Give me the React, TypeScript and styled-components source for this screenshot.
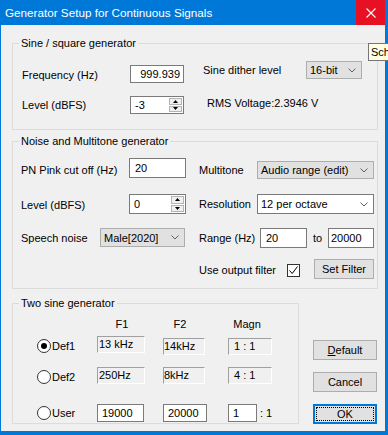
import styled, { createGlobalStyle } from "styled-components"

const GlobalStyle = createGlobalStyle`
  html, body { margin: 0; padding: 0; background: #0078d7; }
  body { font-family: "Liberation Sans", Arial, sans-serif; font-size: 11px; color: #000; }
  * { box-sizing: border-box; }
`

type Place = { $w?: number; $h?: number; $dy?: number; $ml?: number }

const Frame = styled.div`
  position: relative;
  width: 388px;
  height: 435px;
  overflow: hidden;
  background: #0078d7;
  display: flex;
  flex-direction: column;
`

const TitleBar = styled.div`
  height: 25px;
  flex-shrink: 0;
  display: flex;
  align-items: flex-start;
  padding: 0 3px 0 5px;
  color: #fff;
`

const Title = styled.span`
  flex: 1;
  line-height: 25px;
  font-size: 11.7px;
`

const CloseBtn = styled.div`
  width: 29px;
  height: 25px;
  background: #e81123;
  display: flex;
  align-items: center;
  justify-content: center;
`

const Body = styled.div`
  flex: 1;
  margin: 0 3px 4px 1px;
  background: #f0f0f0;
  padding: 10px 0 0 11px;
`

const Group = styled.fieldset<{ $w: number; $pb: number; $mt?: number }>`
  width: ${p => p.$w}px;
  margin: ${p => p.$mt || 0}px 0 0 0;
  padding: 0 0 ${p => p.$pb}px 0;
  border: 1px solid #dcdcdc;
  min-width: 0;
`

const Legend = styled.legend`
  margin-left: 6px;
  padding: 0 2px;
  line-height: 16px;
`

const Row = styled.div<{ $mt: number; $ml?: number }>`
  display: flex;
  align-items: flex-start;
  margin-top: ${p => p.$mt}px;
  margin-left: ${p => p.$ml || 0}px;
`

const Label = styled.span<Place & { $center?: boolean }>`
  display: block;
  flex-shrink: 0;
  width: ${p => (p.$w ? p.$w + "px" : "auto")};
  margin-top: ${p => p.$dy || 0}px;
  margin-left: ${p => p.$ml || 0}px;
  line-height: 16px;
  white-space: nowrap;
  text-align: ${p => (p.$center ? "center" : "left")};
`

const Edit = styled.div<Place & { $right?: boolean; $pl?: number }>`
  flex-shrink: 0;
  width: ${p => p.$w}px;
  height: ${p => p.$h}px;
  margin-top: ${p => p.$dy || 0}px;
  margin-left: ${p => p.$ml || 0}px;
  background: #fff;
  border: 1px solid #7a7a7a;
  padding: 0 3px 0 ${p => (p.$pl ?? 4)}px;
  line-height: ${p => (p.$h || 20) - 2}px;
  text-align: ${p => (p.$right ? "right" : "left")};
  white-space: nowrap;
  overflow: hidden;
`

const SpinBox = styled.div<Place>`
  flex-shrink: 0;
  display: flex;
  width: ${p => p.$w}px;
  height: ${p => p.$h}px;
  margin-top: ${p => p.$dy || 0}px;
  background: #fff;
  border: 1px solid #7a7a7a;
`

const SpinText = styled.span<{ $h: number }>`
  flex: 1;
  padding-left: 4px;
  line-height: ${p => p.$h - 2}px;
`

const SpinCol = styled.div`
  width: 15px;
  display: flex;
  flex-direction: column;
  gap: 1px;
  padding: 1px;
`

const SpinBtn = styled.div`
  flex: 1;
  background: #f0f0f0;
  border: 1px solid #b4b4b4;
  display: flex;
  align-items: center;
  justify-content: center;
`

const Combo = styled.div<Place & { $gray?: boolean }>`
  flex-shrink: 0;
  display: flex;
  align-items: center;
  width: ${p => p.$w}px;
  height: ${p => p.$h}px;
  margin-top: ${p => p.$dy || 0}px;
  margin-left: ${p => p.$ml || 0}px;
  padding: 0 5px 0 3px;
  background: ${p => (p.$gray ? "#e1e1e1" : "#fff")};
  border: 1px solid ${p => (p.$gray ? "#adadad" : "#7a7a7a")};
  white-space: nowrap;
`

const ComboText = styled.span`
  flex: 1;
`

const Static = styled.div<Place & { $pl?: number }>`
  flex-shrink: 0;
  width: ${p => p.$w}px;
  height: 17px;
  margin-top: ${p => p.$dy || 0}px;
  margin-left: ${p => p.$ml || 0}px;
  padding-left: ${p => p.$pl ?? 1}px;
  border-style: solid;
  border-width: 1px;
  border-color: #a0a0a0 #ffffff #ffffff #a0a0a0;
  line-height: 15px;
  white-space: nowrap;
`

const Button = styled.div<Place & { $focus?: boolean }>`
  flex-shrink: 0;
  display: flex;
  width: ${p => p.$w}px;
  height: ${p => p.$h}px;
  margin-top: ${p => p.$dy || 0}px;
  margin-left: ${p => p.$ml || 0}px;
  padding: ${p => (p.$focus ? "2px" : "0")};
  background: #e1e1e1;
  border: 1px solid ${p => (p.$focus ? "#0078d7" : "#adadad")};
  box-shadow: ${p => (p.$focus ? "inset 0 0 0 1px #0078d7" : "none")};
`

const ButtonFace = styled.span<{ $focus?: boolean }>`
  flex: 1;
  display: flex;
  align-items: center;
  justify-content: center;
  border: 1px dotted ${p => (p.$focus ? "#000" : "transparent")};
`

const CheckBox = styled.div<Place>`
  flex-shrink: 0;
  width: 13px;
  height: 13px;
  margin-top: ${p => p.$dy || 0}px;
  background: #fff;
  border: 1px solid #333;
  display: flex;
  align-items: center;
  justify-content: center;
`

const RadioItem = styled.div<Place>`
  flex-shrink: 0;
  display: flex;
  align-items: center;
  gap: 1px;
  width: ${p => p.$w}px;
  height: 16px;
  margin-top: ${p => p.$dy || 0}px;
  margin-left: ${p => p.$ml || 0}px;
`

const RadioCircle = styled.span<{ $on?: boolean }>`
  width: 14px;
  height: 14px;
  border-radius: 50%;
  border: 1px solid #333;
  background: #fff;
  display: flex;
  align-items: center;
  justify-content: center;
  &::after {
    content: "";
    width: 6px;
    height: 6px;
    border-radius: 50%;
    background: ${p => (p.$on ? "#000" : "transparent")};
  }
`

const BottomArea = styled.div`
  display: flex;
  align-items: flex-start;
  margin-top: 6px;
`

const ButtonCol = styled.div`
  display: flex;
  flex-direction: column;
  gap: 12px;
  margin-left: 14px;
  padding-top: 45px;
`

const Tooltip = styled.div`
  position: absolute;
  top: 43px;
  left: 368px;
  height: 18px;
  padding: 0 2px;
  background: #ffffe1;
  border: 1px solid #767676;
  line-height: 16px;
  white-space: nowrap;
`

function Chevron() {
  return (
    <svg width="8" height="5" viewBox="0 0 8 5">
      <polyline points="0.5,0.5 4,4 7.5,0.5" fill="none" stroke="#606060" strokeWidth="1" />
    </svg>
  )
}

function Spin({ value, w, h, dy }: { value: string; w: number; h: number; dy?: number }) {
  return (
    <SpinBox $w={w} $h={h} $dy={dy}>
      <SpinText $h={h}>{value}</SpinText>
      <SpinCol>
        <SpinBtn>
          <svg width="5" height="3" viewBox="0 0 5 3"><polygon points="0,3 2.5,0 5,3" fill="#000" /></svg>
        </SpinBtn>
        <SpinBtn>
          <svg width="5" height="3" viewBox="0 0 5 3"><polygon points="0,0 2.5,3 5,0" fill="#000" /></svg>
        </SpinBtn>
      </SpinCol>
    </SpinBox>
  )
}

export default function App() {
  return (
    <Frame>
      <GlobalStyle />
      <TitleBar>
        <Title>Generator Setup for Continuous Signals</Title>
        <CloseBtn>
          <svg width="10" height="10" viewBox="0 0 10 10">
            <path d="M0.5 0.5L9.5 9.5M9.5 0.5L0.5 9.5" stroke="#fff" strokeWidth="1.1" />
          </svg>
        </CloseBtn>
      </TitleBar>
      <Body>
        <Group $w={366} $pb={15}>
          <Legend>Sine / square generator</Legend>
          <Row $mt={10} $ml={9}>
            <Label $w={108} $dy={6}>Frequency (Hz)</Label>
            <Edit $w={54} $h={18} $dy={4} $right>999.939</Edit>
            <Label $w={103} $ml={19} $dy={1}>Sine dither level</Label>
            <Combo $w={56} $h={18} $gray><ComboText>16-bit</ComboText><Chevron /></Combo>
          </Row>
          <Row $mt={12} $ml={9}>
            <Label $w={108} $dy={2}>Level (dBFS)</Label>
            <Spin value="-3" w={54} h={18} dy={1} />
            <Label $ml={23}>RMS Voltage:2.3946 V</Label>
          </Row>
        </Group>

        <Group $w={366} $pb={9} $mt={3}>
          <Legend>Noise and Multitone generator</Legend>
          <Row $mt={9} $ml={8}>
            <Label $w={108} $dy={4}>PN Pink cut off (Hz)</Label>
            <Edit $w={57} $h={20} $pl={5}>20</Edit>
            <Label $w={58} $ml={13} $dy={4}>Multitone</Label>
            <Combo $w={117} $h={18} $dy={3} $gray><ComboText>Audio range (edit)</ComboText><Chevron /></Combo>
          </Row>
          <Row $mt={15} $ml={8}>
            <Label $w={108} $dy={3}>Level (dBFS)</Label>
            <Spin value="0" w={57} h={20} />
            <Label $w={58} $ml={13} $dy={2}>Resolution</Label>
            <Combo $w={117} $h={20}><ComboText>12 per octave</ComboText><Chevron /></Combo>
          </Row>
          <Row $mt={14} $ml={8}>
            <Label $w={79} $dy={2}>Speech noise</Label>
            <Combo $w={85} $h={19} $gray><ComboText>Male[2020]</ComboText><Chevron /></Combo>
            <Label $w={61} $ml={14} $dy={2}>Range (Hz)</Label>
            <Edit $w={47} $h={20} $pl={5}>20</Edit>
            <Label $w={15} $ml={6} $dy={2}>to</Label>
            <Edit $w={46} $h={20} $pl={2}>20000</Edit>
          </Row>
          <Row $mt={11} $ml={186}>
            <Label $w={88} $dy={3}>Use output filter</Label>
            <CheckBox $dy={5}>
              <svg width="11" height="11" viewBox="0 0 11 11">
                <polyline points="1.5,5.5 4.2,8.5 9.5,1.5" fill="none" stroke="#000" strokeWidth="1" />
              </svg>
            </CheckBox>
            <Button $w={60} $h={20} $ml={14}><ButtonFace>Set Filter</ButtonFace></Button>
          </Row>
        </Group>

        <BottomArea>
          <Group $w={287} $pb={1}>
            <Legend>Two sine generator</Legend>
            <Row $mt={5}>
              <Label $w={50} $ml={84} $center>F1</Label>
              <Label $w={34} $ml={16} $center>F2</Label>
              <Label $w={38} $ml={31} $center>Magn</Label>
            </Row>
            <Row $mt={4}>
              <RadioItem $w={60} $ml={24} $dy={2}><RadioCircle $on />Def1</RadioItem>
              <Static $w={48}>13 kHz</Static>
              <Static $w={42} $ml={18} $dy={2} $pl={0}>14kHz</Static>
              <Static $w={44} $ml={23} $dy={2} $pl={5}>1 : 1</Static>
            </Row>
            <Row $mt={12}>
              <RadioItem $w={60} $ml={24} $dy={2}><RadioCircle />Def2</RadioItem>
              <Static $w={48}>250Hz</Static>
              <Static $w={42} $ml={18} $pl={0}>8kHz</Static>
              <Static $w={44} $ml={23} $pl={5}>4 : 1</Static>
            </Row>
            <Row $mt={19}>
              <RadioItem $w={60} $ml={24} $dy={1}><RadioCircle />User</RadioItem>
              <Edit $w={47} $h={18}>19000</Edit>
              <Edit $w={44} $h={18} $ml={19}>20000</Edit>
              <Edit $w={29} $h={18} $ml={21}>1</Edit>
              <Label $ml={3} $dy={1}>: 1</Label>
            </Row>
          </Group>
          <ButtonCol>
            <Button $w={64} $h={20}><ButtonFace><span><u>D</u>efault</span></ButtonFace></Button>
            <Button $w={64} $h={20}><ButtonFace>Cancel</ButtonFace></Button>
            <Button $w={64} $h={20} $focus><ButtonFace $focus>OK</ButtonFace></Button>
          </ButtonCol>
        </BottomArea>
      </Body>
      <Tooltip>Schließen</Tooltip>
    </Frame>
  )
}
